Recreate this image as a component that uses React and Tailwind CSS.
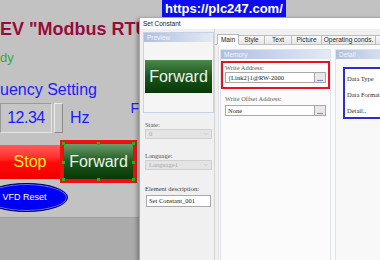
import { ChevronDown } from "lucide-react"

const serif = "font-['Liberation_Serif',serif]"

function Handle({ className }) {
  return <span className={`absolute w-[3px] h-[3px] bg-[#10c010] ${className}`} />
}

function GroupHeader({ title }) {
  return (
    <div className="h-[9px] bg-gradient-to-r from-[#aebfe0] to-[#e4eaf5] pl-[3px] text-[6.5px] leading-[9px] text-[#f4f6fb]">
      {title}
    </div>
  )
}

function Dropdown({ value }) {
  return (
    <div className="ml-[2px] w-[67px] h-[10px] flex items-center justify-between bg-[#e4e4e4] border border-[#d0d0d0] pl-[3px] pr-[2px]">
      <span className={`${serif} text-[6.5px] leading-[8px] text-[#a8a8a8]`}>{value}</span>
      <ChevronDown size={6} strokeWidth={1.5} className="text-[#a0a0a0]" />
    </div>
  )
}

function AddressField({ value }) {
  return (
    <div className="flex h-[11px]">
      <div className={`w-[90px] bg-white border border-[#a8a8a8] pl-[2px] ${serif} text-[6.5px] leading-[9px] text-[#202020]`}>
        {value}
      </div>
      <div className="w-[11px] bg-[#e8e8e8] border border-[#a8a8a8] border-l-0 text-[7px] leading-[11px] text-center font-bold text-[#404040]">
        ...
      </div>
    </div>
  )
}

export default function App() {
  const tabs = [
    { label: "Style", w: "w-[26px]" },
    { label: "Text", w: "w-[27px]" },
    { label: "Picture", w: "w-[30px]" },
    { label: "Operating conds.", w: "w-[54px]" },
    { label: "", w: "w-[20px]" },
  ]

  return (
    <div className="relative w-[380px] h-[260px] overflow-hidden bg-[#c2c2c2] font-['Liberation_Sans',Arial,sans-serif]">
      {/* HMI screen, cut off by the dialog at x=139 */}
      <div className="flex flex-col h-full">
        <div className="mt-[20px] w-[139px] overflow-hidden text-[18px] leading-[18px] font-bold text-[#990b3c] whitespace-nowrap">
          EV "Modbus RTU"
        </div>
        <div className="mt-[13px] text-[13px] leading-[13px] text-[#38a838]">dy</div>
        <div className="mt-[18px] text-[16px] leading-[16px] text-[#1c1cff] whitespace-nowrap">uency Setting</div>

        <div className="mt-[5px] h-[30px] flex">
          <div className="w-[52px] h-[30px] flex items-center justify-center bg-[#c6c6c6] border border-[#e4e4e4] border-t-[#9a9a9a] border-l-[#9a9a9a] text-[16px] tracking-[-0.5px] text-[#1c1cff]">
            12.34
          </div>
          <div className="ml-[2px] w-[9px] h-[30px] bg-[#c8c8c8] border border-[#ececec] border-r-[#8a8a8a] border-b-[#8a8a8a]" />
          <div className="ml-[7px] self-center text-[16px] leading-[16px] text-[#1c1cff]">Hz</div>
          <div className="ml-[41px] -mt-[3px] w-[9px] overflow-hidden text-[14px] leading-[16px] text-[#1c1cff]">F</div>
        </div>

        <div className="mt-[7px] h-[43px] flex items-center">
          <div className="w-[60px] h-[34px] flex items-center justify-center bg-gradient-to-b from-[#ff5a5a] via-[#ff0a0a] to-[#f00000] text-[16px] text-[#ffef2a]">
            Stop
          </div>
          <div className="relative w-[77px] h-[43px] border-[3px] border-[#ee1111]">
            <div className="h-full flex items-center justify-center border border-[#2a6a2a] bg-gradient-to-b from-[#6e9c6e] via-[#1c5a1c] to-[#063806] text-[16px] text-[#eef4ee]">
              Forward
            </div>
            <Handle className="-left-[1px] -top-[1px]" />
            <Handle className="left-[34px] -top-[1px]" />
            <Handle className="-right-[1px] -top-[1px]" />
            <Handle className="-left-[1px] top-[18px]" />
            <Handle className="-right-[1px] top-[18px]" />
            <Handle className="-left-[1px] -bottom-[1px]" />
            <Handle className="left-[34px] -bottom-[1px]" />
            <Handle className="-right-[1px] -bottom-[1px]" />
          </div>
        </div>

        <div className="-ml-[15px] w-[83px] h-[29px] rounded-[50%] bg-[#0000f4] border border-[#00005a] shadow-[inset_0_0_0_1px_#6a6aff] flex items-center justify-center text-[9px] text-white">
          <span className="pr-[4px]">VFD Reset</span>
        </div>

        <div className="mt-[5px] flex-1 bg-[#ababab] border-t border-[#a0a0a0]" />
      </div>

      {/* Set Constant dialog */}
      <div className="absolute left-[139px] top-[17px] w-[245px] h-[246px] flex flex-col bg-[#f0f0f0] border-l border-t border-[#a8a8a8] shadow-[-2px_2px_4px_rgba(0,0,0,0.3)]">
        <div className="h-[11px] bg-white pl-[3px] text-[6.5px] leading-[11px] text-[#202020]">Set Constant</div>
        <div className="flex flex-1">
          <div className="w-[78px] bg-[#f0f0f0] border-r border-[#d4d4d4] pl-[3px] pt-[3px]">
            <div className="w-[71px] h-[81px] border border-[#c6d2e6] bg-[#f5f5f5]">
              <GroupHeader title="Preview" />
              <div className="mt-[18px] ml-[1px] w-[67px] h-[33px] flex items-center justify-center bg-gradient-to-b from-[#4c8a4c] via-[#1a541a] to-[#073807] text-[16px] text-[#eef4ee]">
                Forward
              </div>
            </div>
            <div className={`mt-[7px] ml-[2px] ${serif} text-[6.5px] leading-[9px] text-[#505050]`}>State:</div>
            <Dropdown value="0" />
            <div className={`mt-[12px] ml-[2px] ${serif} text-[6.5px] leading-[9px] text-[#505050]`}>Language:</div>
            <Dropdown value="Language1" />
            <div className={`mt-[14px] ml-[2px] ${serif} text-[6.5px] leading-[9px] text-[#404040]`}>Element description:</div>
            <div className={`mt-[2px] ml-[3px] w-[65px] h-[12px] bg-white border border-[#a8a8a8] pl-[2px] ${serif} text-[6.5px] leading-[10px] text-[#202020]`}>
              Set Constant_001
            </div>
          </div>

          <div className="flex-1 flex flex-col bg-[#f0f0f0]">
            <div className="flex items-end h-[16px] pl-[2px] border-b border-[#c0c0c0]">
              <div className="w-[22px] h-[11px] -mb-px bg-white border border-[#b8b8b8] border-b-white text-[6.5px] leading-[9px] text-center text-[#202020]">
                Main
              </div>
              {tabs.map((t) => (
                <div
                  key={t.label}
                  className={`${t.w} h-[9px] bg-gradient-to-b from-[#f8f8f8] to-[#e6e6e6] border border-l-0 border-b-0 border-[#bcbcbc] text-[6.5px] leading-[8px] text-center text-[#303030] whitespace-nowrap`}
                >
                  {t.label}
                </div>
              ))}
            </div>

            <div className="flex-1 flex bg-[#fbfbfb] ml-[3px] border-l border-[#e0e0e0] pl-[1px]">
              <div className="w-[111px] mt-[4px] border border-[#dde3ee] border-b-0 flex flex-col">
                <GroupHeader title="Memory" />
                <div className="mt-[2px] h-[28px] border-2 border-[#e8141c] pl-[2px]">
                  <div className={`mt-[1px] ${serif} text-[6.5px] leading-[8px] text-[#606060]`}>Write Address:</div>
                  <AddressField value="{Link2}1@RW-2000" />
                </div>
                <div className="pl-[4px]">
                  <div className={`mt-[6px] ${serif} text-[6.5px] leading-[8px] text-[#606060]`}>Write Offset Address:</div>
                  <div className="mt-[2px]">
                    <AddressField value="None" />
                  </div>
                </div>
              </div>

              <div className="flex-1 ml-[4px] mt-[4px] border border-[#dde3ee] border-b-0 border-r-0 bg-[#f8f8f8]">
                <GroupHeader title="Detail" />
                <div className="ml-[7px] mt-[8px] h-[52px] border-2 border-r-0 border-[#2c2cd2] pl-[2px] pt-[2px] bg-white">
                  <div className={`${serif} text-[6.5px] leading-[16px] text-[#303030]`}>Data Type</div>
                  <div className={`${serif} text-[6.5px] leading-[16px] text-[#303030] whitespace-nowrap`}>Data Format</div>
                  <div className={`${serif} text-[6.5px] leading-[16px] text-[#303030]`}>Detail..</div>
                </div>
              </div>
            </div>
          </div>
        </div>
      </div>

      {/* watermark banner */}
      <div className="absolute left-[162px] top-0 w-[124px] h-[17px] bg-[#0c0cee] text-[13px] leading-[17px] font-bold text-white pl-[3px] whitespace-nowrap">
        https://plc247.com/
      </div>
    </div>
  )
}
